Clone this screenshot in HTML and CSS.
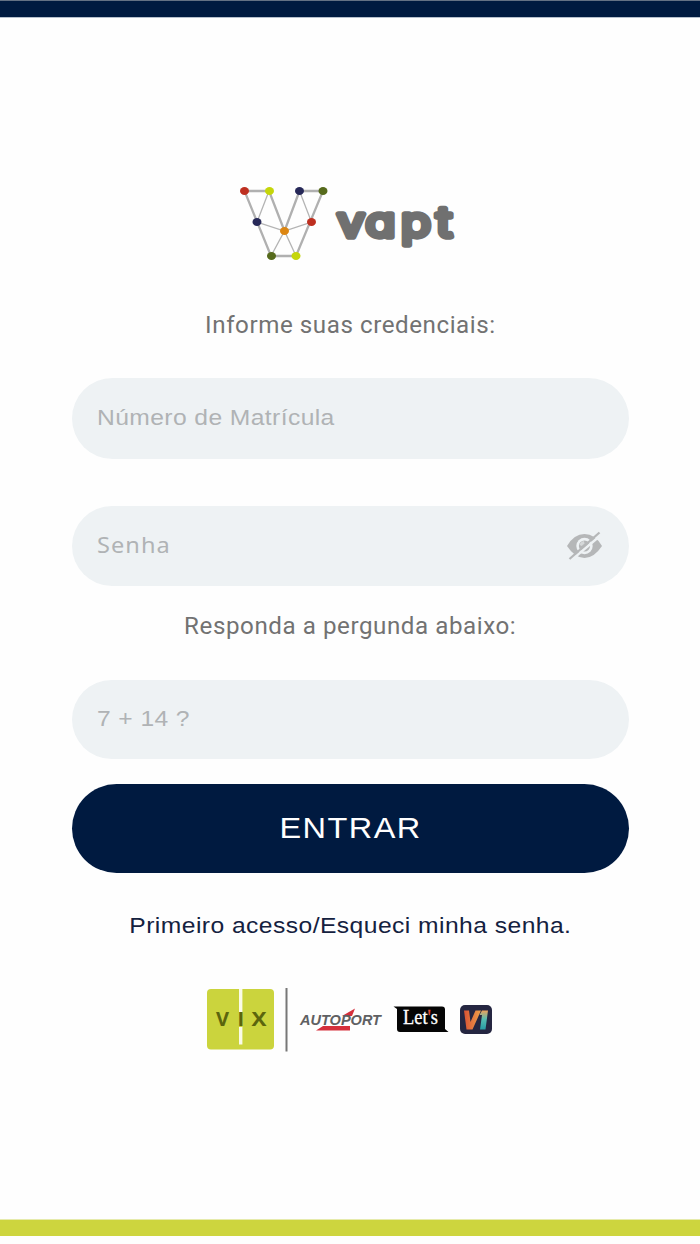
FILE: index.html
```html
<!DOCTYPE html>
<html lang="pt-BR">
<head>
<meta charset="utf-8">
<title>vapt</title>
<link rel="stylesheet" href="styles.css">
</head>
<body>
<div class="topbar"></div>
<main class="login">
  <svg class="logo" width="230" height="84" viewBox="238 182 230 84">
    <path d="M269 191L257 222L284.500 231L311.500 222L299.500 191M271 256L284.500 231L296 256" fill="none" stroke="#b4b4b4" stroke-width="1.300"/>
    <path d="M269 191H244.500L271 256H296L323 191H299.500L284.500 231Z" fill="none" stroke="#b0b0b0" stroke-width="2.300"/>
    <g fill="#be2f20"><ellipse cx="244.500" cy="191" rx="4.500" ry="4"/><ellipse cx="311.500" cy="222" rx="4.500" ry="4"/></g>
    <g fill="#c5d60a"><ellipse cx="269.500" cy="191" rx="4.500" ry="4"/><ellipse cx="296" cy="256" rx="4.500" ry="4"/></g>
    <g fill="#262858"><ellipse cx="299.500" cy="191" rx="4.500" ry="4"/><ellipse cx="257" cy="222" rx="4.500" ry="4"/></g>
    <g fill="#566a1c"><ellipse cx="323" cy="191" rx="4.500" ry="4"/><ellipse cx="271.500" cy="256" rx="4.500" ry="4"/></g>
    <ellipse cx="284.500" cy="231" rx="4.500" ry="4" fill="#dc8612"/>
    <text class="wordmark" transform="translate(336 237) scale(1.160 1)" x="1 25.500 56 86.500" y="0">vapt</text>
  </svg>
  <p class="hint"><span class="hint-text">Informe suas credenciais:</span></p>
  <div class="field"><span class="placeholder">Número de Matrícula</span></div>
  <div class="field field-password">
    <span class="placeholder placeholder-password">Senha</span>
    <svg class="eye" width="38" height="30" viewBox="0 0 38 30">
      <path d="M1 15Q8 3 18.500 3T36 15Q28 27 18.500 27T1 15Z" fill="#b5b7b8"/>
      <circle cx="18.500" cy="15" r="8.200" fill="#eef2f4"/>
      <circle cx="18.500" cy="15" r="5.600" fill="#b5b7b8"/>
      <path d="M13.500 14Q14.500 10.500 18 10L18.500 13Q16.500 13.500 16 15Z" fill="#d5d8d9"/>
      <path d="M5 29.500L35 4" stroke="#eef2f4" stroke-width="2.400"/>
      <path d="M3.500 28L33.500 1.500" stroke="#b5b7b8" stroke-width="2.200"/>
    </svg>
  </div>
  <p class="hint hint-question"><span class="hint-text">Responda a pergunda abaixo:</span></p>
  <div class="field field-answer"><span class="placeholder">7 + 14 ?</span></div>
  <button class="submit" type="button"><span class="submit-text">ENTRAR</span></button>
  <a class="recover"><span class="recover-text">Primeiro acesso/Esqueci minha senha.</span></a>
  <svg class="brands" width="290" height="68" viewBox="205 986 290 68">
    <rect x="207" y="989" width="67" height="60.500" rx="4" fill="#cbd43d"/>
    <path d="M240.700 989V1044.500" stroke="#fafbe8" stroke-width="3.400"/>
    <path d="M240.700 1012V1027" stroke="#cbd43d" stroke-width="4"/>
    <g class="vix"><text x="216" y="1026">V</text><text x="237.600" y="1026">I</text><text x="251.500" y="1026" textLength="15" lengthAdjust="spacingAndGlyphs">X</text></g>
    <path d="M286.500 988V1051.500" stroke="#777" stroke-width="2"/>
    <path d="M316 1030.500L323 1026H350V1030.500ZM342 1016L355 1008.500L352 1016Z" fill="#d5303c"/>
    <text class="autoport" x="300" y="1025" textLength="81" lengthAdjust="spacingAndGlyphs">AUTOPORT</text>
    <path d="M393.500 1006.500H442Q445 1006.500 445 1009.500V1029L448.500 1032H400Q397 1032 397 1029V1009Z" fill="#050505"/>
    <text class="lets" x="403" y="1024" textLength="35" lengthAdjust="spacingAndGlyphs">Let<tspan fill="#e8543c" stroke="#e8543c">'</tspan>s</text>
    <rect x="460" y="1005" width="32" height="29" rx="5" fill="#252641"/>
    <defs>
      <linearGradient id="warm" x1="0" y1="0" x2="1" y2="0"><stop offset="0" stop-color="#d95334"/><stop offset="1" stop-color="#eea04a"/></linearGradient>
      <linearGradient id="cool" x1="0" y1="0" x2="0" y2="1"><stop offset="0" stop-color="#f0a15b"/><stop offset=".45" stop-color="#56bdb1"/><stop offset="1" stop-color="#279ba5"/></linearGradient>
    </defs>
    <path d="M464 1010.500H469L470.500 1022L475.500 1010.500H481L472.500 1029.500H466.500Z" fill="url(#warm)"/>
    <path d="M479.500 1015L482 1010.500H488L485.500 1029.500H480L482 1015Z" fill="url(#cool)"/>
  </svg>
</main>
<div class="bottombar"></div>
</body>
</html>
```
FILE: styles.css
```css
* { box-sizing: border-box; }
body {
  margin: 0;
  height: 1244px;
  display: flex;
  flex-direction: column;
  background: #fefefe;
  font-family: "Liberation Sans", Arial, sans-serif;
  overflow: hidden;
}
.topbar {
  height: 18px;
  flex: none;
  background: #001a40;
  border-top: 1px solid #647184;
  border-bottom: 1px solid #b5bfcc;
}
.bottombar {
  height: 17px;
  flex: none;
  margin-bottom: 8px;
  background: #cdd53e;
  border-top: 1px solid #e6ebac;
}
.login {
  flex: 1;
  display: flex;
  flex-direction: column;
  align-items: center;
  padding-top: 164px;
}
.logo { flex: none; display: block; margin-left: 6px; }
.wordmark {
  font: 400 42px Inter, sans-serif;
  font-feature-settings: "cv11";
  fill: #707070;
  stroke: #707070;
  stroke-width: 5.4px;
  stroke-linejoin: round;
}
.hint {
  margin: 45px 0 37px;
  height: 30px;
  line-height: 30px;
  font-family: Roboto, sans-serif;
  font-size: 23px;
  color: #727272;
  white-space: nowrap;
}
.hint-text {
  display: inline-block;
  padding-left: 1px;
  letter-spacing: .53px;
  transform: scaleX(1.05);
}
.field {
  width: 557px;
  height: 81px;
  flex: none;
  display: flex;
  align-items: center;
  padding: 0 25px;
  border-radius: 41px;
  background: #eef2f4;
}
.field-password { height: 80px; margin-top: 47px; justify-content: space-between; }
.field-answer { height: 79px; }
.placeholder {
  padding-bottom: 1px;
  font-size: 22px;
  letter-spacing: .36px;
  color: #b0b3b5;
  transform: scaleX(1.12);
  transform-origin: left;
  white-space: nowrap;
}
.placeholder-password {
  padding-bottom: 4px;
  font-family: "Noto Sans", sans-serif;
  letter-spacing: 1px;
  transform: scaleX(1.07);
}
.eye { display: block; }
.hint-question { margin: 26px 0 38px; }
.submit {
  width: 557px;
  height: 89px;
  flex: none;
  margin: 25px 0 0;
  border: 0;
  border-radius: 45px;
  background: #001a40;
  color: #fff;
  font: 29px "Liberation Sans", Arial, sans-serif;
}
.submit-text {
  display: inline-block;
  padding-left: 2px;
  letter-spacing: 1.3px;
  transform: scaleX(1.12);
}
.recover {
  margin-top: 38px;
  height: 30px;
  line-height: 30px;
  font-size: 22px;
  color: #14213f;
  white-space: nowrap;
}
.recover-text { display: inline-block; letter-spacing: .4px; transform: scaleX(1.12); }
.brands { display: block; flex: none; margin-top: 45px; }
.vix { font: 700 20px "Open Sans", sans-serif; fill: #5b650d; }
.autoport { font: italic 700 14px "Liberation Sans", Arial, sans-serif; fill: #5f6062; }
.lets { font: 20px "Liberation Serif", serif; fill: #fff; stroke: #fff; stroke-width: .3px; }
```
